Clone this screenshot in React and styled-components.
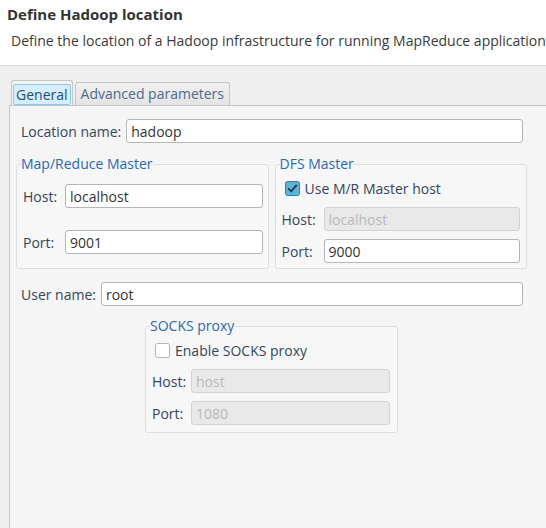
import React from "react";
import styled, { createGlobalStyle } from "styled-components";

const GlobalStyle = createGlobalStyle`
  html, body {
    margin: 0;
    padding: 0;
    background: #efefef;
  }
  body {
    font-family: "Open Sans", "Noto Sans", sans-serif;
    font-size: 14px;
    color: #3c3c3c;
    overflow: hidden;
  }
`;

const Page = styled.div`
  width: 546px;
  height: 528px;
  display: flex;
  flex-direction: column;
  overflow: hidden;
`;

const Header = styled.div`
  height: 66px;
  background: #ffffff;
  border-bottom: 1px solid #d6d6d6;
  padding: 4px 0 0 7px;
  box-sizing: border-box;
  white-space: nowrap;
  overflow: hidden;

  h1 {
    margin: 0;
    font-size: 15px;
    font-weight: 700;
    color: #333333;
    line-height: 20px;
  }

  p {
    margin: 7px 0 0 4px;
    font-size: 14px;
    color: #3a3a3a;
    line-height: 20px;
  }
`;

const Body = styled.div`
  flex: 1;
  padding: 14px 0 0 9px;
  display: flex;
  flex-direction: column;
`;

const TabBar = styled.div`
  display: flex;
  align-items: flex-end;
  padding-left: 2px;
  height: 25px;
  gap: 2px;
`;

const Tab = styled.div`
  box-sizing: border-box;
  height: ${(p) => (p.active ? "25px" : "23px")};
  padding: ${(p) => (p.active ? "3px 1px 0" : "1px 5px 0")};
  border: 1px solid #c4c4c4;
  border-bottom: none;
  border-radius: 3px 3px 0 0;
  background: ${(p) => (p.active ? "#f5f5f5" : "linear-gradient(#f0f0f0, #e4e4e4)")};
  color: ${(p) => (p.active ? "#1f4e79" : "#4d6a8c")};
  font-size: 14px;
  line-height: 19px;

  span {
    display: block;
    padding: 0 2px;
    border: ${(p) => (p.active ? "1px solid #8dc8e4" : "1px solid transparent")};
    border-radius: 2px;
    background: ${(p) => (p.active ? "#d6eef9" : "transparent")};
  }
`;

const Panel = styled.div`
  flex: 1;
  background: #f5f5f5;
  border-top: 1px solid #c4c4c4;
  border-left: 1px solid #c4c4c4;
  padding: 13px 0 0 6px;
`;

const Content = styled.div`
  width: 511px;
  display: flex;
  flex-direction: column;
`;

const FieldRow = styled.div`
  display: flex;
  align-items: center;
  gap: ${(p) => p.gap || 5}px;
  padding: ${(p) => p.pad || "0 4px 0 5px"};
  margin-top: ${(p) => p.top || 0}px;
`;

const Label = styled.label`
  color: #34455b;
  font-size: 14px;
  white-space: nowrap;
  width: ${(p) => (p.w ? p.w + "px" : "auto")};
`;

const Input = styled.input`
  flex: 1;
  min-width: 0;
  height: 24px;
  box-sizing: border-box;
  border: 1px solid ${(p) => (p.disabled ? "#d2d2d2" : "#b5b5b5")};
  border-radius: 3px;
  background: ${(p) => (p.disabled ? "#e9e9e9" : "#ffffff")};
  color: ${(p) => (p.disabled ? "#b8b8b8" : "#333333")};
  font-family: inherit;
  font-size: 14px;
  padding: 0 4px;
  outline: none;
`;

const GroupRow = styled.div`
  display: flex;
  gap: 6px;
  justify-content: ${(p) => (p.center ? "center" : "flex-start")};
  margin-top: ${(p) => p.top}px;
`;

const Group = styled.fieldset`
  box-sizing: border-box;
  width: ${(p) => p.w}px;
  margin: 0;
  padding: ${(p) => p.pad};
  border: 1px solid #dedede;
  border-radius: 3px;
  background: #f7f7f7;
  display: flex;
  flex-direction: column;
  gap: ${(p) => p.gap}px;

  legend {
    padding: 0;
    margin-left: -2px;
    color: #2c68ad;
    font-size: 14px;
    line-height: 18px;
  }
`;

const CheckRow = styled.label`
  display: flex;
  align-items: center;
  gap: 5px;
  padding-left: 3px;
  margin-bottom: ${(p) => p.after || 0}px;
  color: #34455b;
  font-size: 14px;
  height: 20px;
`;

const CheckBox = ({ checked }) => (
  <svg width="15" height="15" viewBox="0 0 15 15">
    {checked ? (
      <>
        <rect x="0.5" y="0.5" width="14" height="14" rx="2" fill="#5fb3d6" stroke="#2f82a8" />
        <path d="M3.2 7.4 L6.2 10.4 L11.8 3.8" fill="none" stroke="#1d3d5c" strokeWidth="2" />
      </>
    ) : (
      <rect x="0.5" y="0.5" width="14" height="14" rx="2" fill="#ffffff" stroke="#b3b3b3" />
    )}
  </svg>
);

export default function App() {
  return (
    <Page>
      <GlobalStyle />
      <Header>
        <h1>Define Hadoop location</h1>
        <p>Define the location of a Hadoop infrastructure for running MapReduce applications.</p>
      </Header>
      <Body>
        <TabBar>
          <Tab active>
            <span>General</span>
          </Tab>
          <Tab>Advanced parameters</Tab>
        </TabBar>
        <Panel>
          <Content>
            <FieldRow>
              <Label>Location name:</Label>
              <Input defaultValue="hadoop" />
            </FieldRow>

            <GroupRow top={12}>
              <Group w={253} pad="11px 5px 12px 6px" gap={22}>
                <legend>Map/Reduce Master</legend>
                <FieldRow pad="0" gap={5}>
                  <Label w={37}>Host:</Label>
                  <Input defaultValue="localhost" />
                </FieldRow>
                <FieldRow pad="0" gap={5}>
                  <Label w={37}>Port:</Label>
                  <Input defaultValue="9001" />
                </FieldRow>
              </Group>
              <Group w={253} pad="5px 6px 5px 6px" gap={8}>
                <legend>DFS Master</legend>
                <CheckRow after={1}>
                  <CheckBox checked />
                  Use M/R Master host
                </CheckRow>
                <FieldRow pad="0" gap={5}>
                  <Label w={37}>Host:</Label>
                  <Input disabled defaultValue="localhost" />
                </FieldRow>
                <FieldRow pad="0" gap={5}>
                  <Label w={37}>Port:</Label>
                  <Input defaultValue="9000" />
                </FieldRow>
              </Group>
            </GroupRow>

            <FieldRow top={13}>
              <Label>User name:</Label>
              <Input defaultValue="root" />
            </FieldRow>

            <GroupRow center top={11}>
              <Group w={253} pad="5px 7px 7px 6px" gap={8}>
                <legend>SOCKS proxy</legend>
                <CheckRow after={1}>
                  <CheckBox />
                  Enable SOCKS proxy
                </CheckRow>
                <FieldRow pad="0" gap={4}>
                  <Label w={35}>Host:</Label>
                  <Input disabled defaultValue="host" />
                </FieldRow>
                <FieldRow pad="0" gap={4}>
                  <Label w={35}>Port:</Label>
                  <Input disabled defaultValue="1080" />
                </FieldRow>
              </Group>
            </GroupRow>
          </Content>
        </Panel>
      </Body>
    </Page>
  );
}
